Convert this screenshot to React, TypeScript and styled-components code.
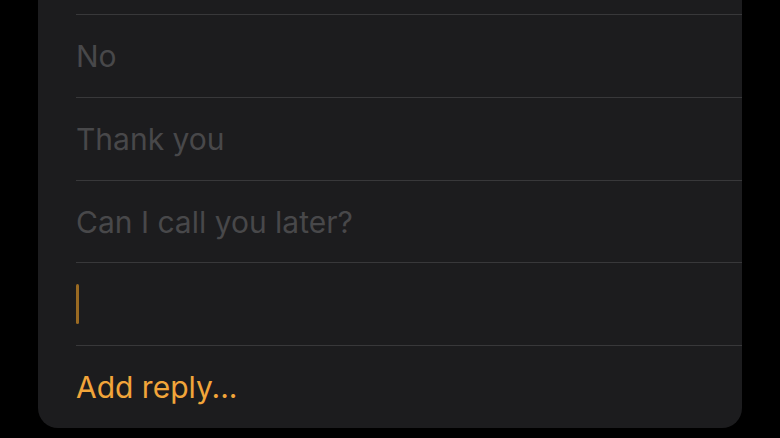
import React from "react";
import styled, { createGlobalStyle } from "styled-components";

const Global = createGlobalStyle`
  html, body { margin: 0; padding: 0; background: #000; }
  body { width: 780px; height: 438px; overflow: hidden; font-family: Inter, "Noto Sans", sans-serif; }
`;

const Page = styled.div`
  width: 780px;
  height: 438px;
  background: #000;
  display: flex;
  padding: 0 38px 10px 38px;
  box-sizing: border-box;
  align-items: flex-end;
`;

const Card = styled.div`
  flex: 1;
  background: #1c1c1e;
  border-radius: 0 0 20px 20px;
  padding-left: 38px;
  display: flex;
  flex-direction: column;
`;

const Stub = styled.div`
  height: 14px;
  border-bottom: 1px solid #38383a;
`;

const Row = styled.div<{ $h?: number; $last?: boolean }>`
  height: ${(p) => p.$h ?? 82}px;
  display: flex;
  align-items: center;
  border-bottom: ${(p) => (p.$last ? "none" : "1px solid #38383a")};
  font-size: 30px;
  letter-spacing: 0;
  color: #48484a;
`;

const Action = styled(Row)`
  color: #f2a53a;
`;

const Caret = styled.div`
  width: 3px;
  height: 40px;
  border-radius: 1.5px;
  background: #9a6a22;
`;

export default function App() {
  return (
    <>
      <Global />
      <Page>
        <Card>
          <Stub />
          <Row>No</Row>
          <Row>Thank you</Row>
          <Row $h={81}>Can I call you later?</Row>
          <Row>
            <Caret />
          </Row>
          <Action $h={82} $last>
            Add reply...
          </Action>
        </Card>
      </Page>
    </>
  );
}
